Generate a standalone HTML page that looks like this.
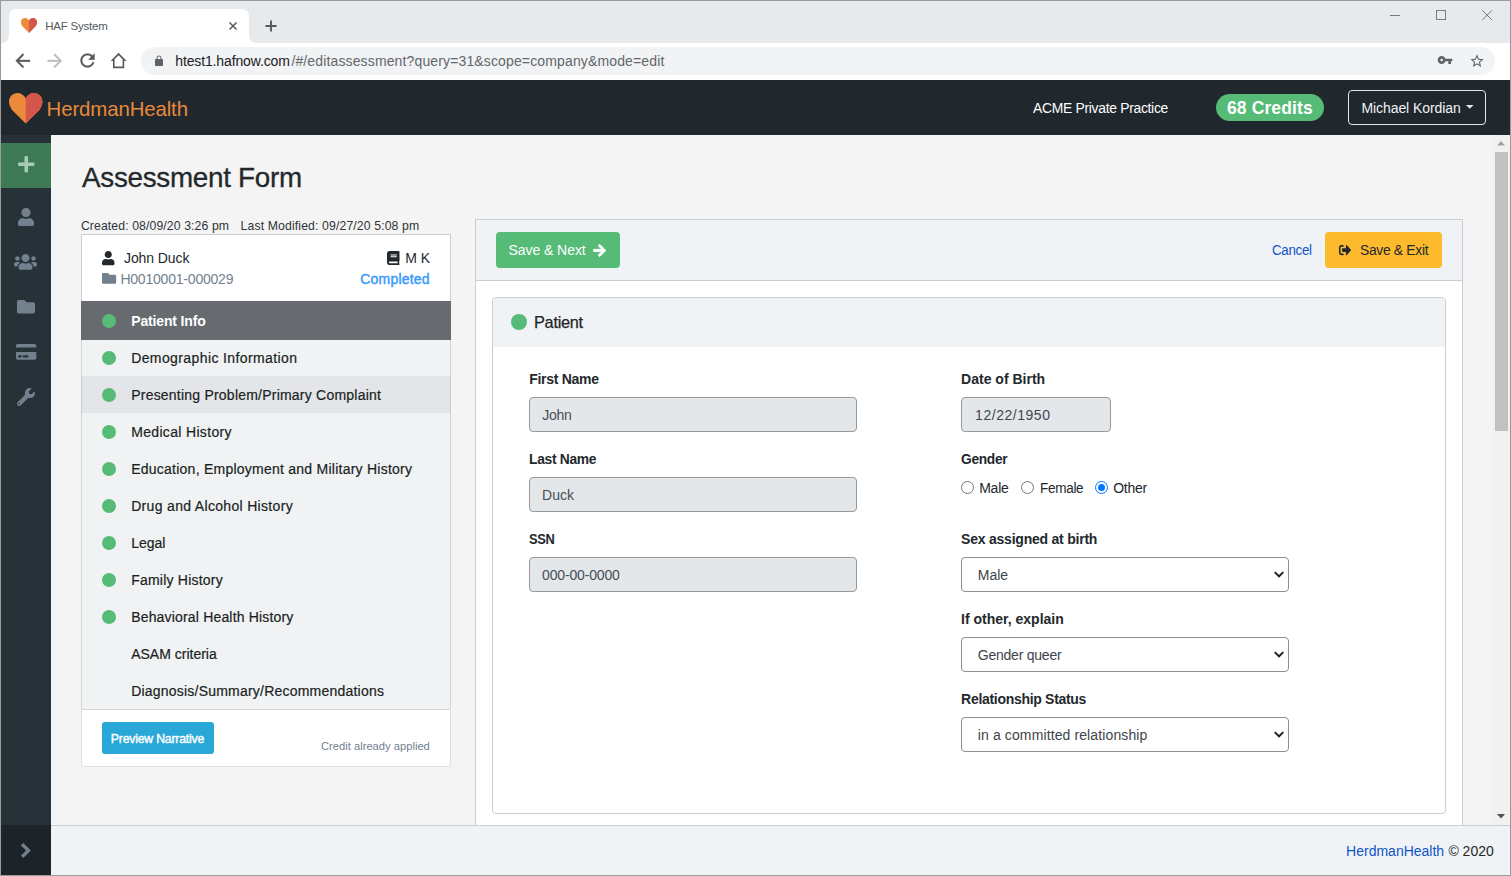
<!DOCTYPE html>
<html lang="en">
<head>
<meta charset="utf-8">
<title>HAF System</title>
<style>
*{box-sizing:border-box;margin:0;padding:0}
html,body{width:1511px;height:876px;overflow:hidden;background:#f4f4f4}
body{position:relative;font-family:"Liberation Sans",sans-serif;color:#23282c;font-size:14px}
.a{position:absolute}
.t{position:absolute;white-space:nowrap;line-height:1}
svg{position:absolute;display:block;overflow:visible}
#frame{left:0;top:0;width:1511px;height:876px;border:1px solid #9b9b9b;z-index:50}
#tabstrip{left:1px;top:1px;width:1509px;height:42px;background:#e7eaed}
#toolbar{left:1px;top:43px;width:1509px;height:37px;background:#fff}
#omni{left:141px;top:47px;width:1354px;height:28px;border-radius:14px;background:#f1f3f4}
#nav{left:1px;top:80px;width:1509px;height:55px;background:#20272d}
#side{left:1px;top:135px;width:50px;height:690px;background:#273238}
#sideplus{left:1px;top:143px;width:50px;height:45px;background:#3f7a57}
#sidemin{left:1px;top:825px;width:50px;height:50px;background:#1c2329}
#foot{left:51px;top:825px;width:1459px;height:50px;background:#f0f3f5;border-top:1px solid #c8ced3;z-index:5}
#sbar{left:1493px;top:135px;width:17px;height:690px;background:#f1f1f1}
#sthumb{left:1495px;top:152px;width:13px;height:279px;background:#c1c1c1}
#lcard{left:81px;top:234px;width:370px;height:70px;background:#fff;border:1px solid #c8ced3;border-bottom:0}
.row{position:absolute;left:82px;width:368px;height:37px;background:#f0f2f4}
.dot{position:absolute;left:102px;width:14px;height:14px;border-radius:50%;background:#55bb76}
#mcard{left:475px;top:219px;width:988px;height:620px;background:#fff;border:1px solid #c8ced3}
#mhead{left:476px;top:220px;width:986px;height:61px;background:#f0f3f5;border-bottom:1px solid #c8ced3}
#icard{left:492px;top:297px;width:954px;height:517px;background:#fff;border:1px solid #c8ced3;border-radius:4px}
#ihead{left:493px;top:298px;width:952px;height:49px;background:#f0f3f5;border-radius:3px 3px 0 0}
.inp{position:absolute;height:35px;border:1px solid #999;border-radius:4px;background:#e4e7ea}
.sel{position:absolute;left:961px;width:328px;height:35px;border:1px solid #8e8e8e;border-radius:4px;background:#fff}
.btn{position:absolute;border-radius:4px}
.radio{position:absolute;top:481px;width:13px;height:13px;border-radius:50%;border:1px solid #767676;background:#fff}
</style>
</head>
<body>
<!-- browser chrome -->
<div class="a" id="tabstrip"></div>
<svg style="left:0;top:0" width="260" height="44" viewBox="0 0 260 44"><path d="M1 43 Q9 43 9 35 L9 17 Q9 9 17 9 L241 9 Q249 9 249 17 L249 35 Q249 43 257 43 Z" fill="#fff"/></svg>
<div class="a" id="toolbar"></div>
<div class="a" id="omni"></div>
<!-- favicon heart -->
<svg style="left:21px;top:18.100px" width="16" height="15.100" viewBox="0 0 33.4 30.6" preserveAspectRatio="none"><defs><clipPath id="hl"><rect x="-1" y="-1" width="17.7" height="33"/></clipPath><clipPath id="hr"><rect x="16.7" y="-1" width="18" height="33"/></clipPath></defs><path id="hp" fill="#ec8a3b" d="M16.7 5.300C14.800 2 12 0 8.600 0C3.600 0 0 3.900 0 8.600C0 11.500 1 13.800 3 16.900L16.700 30.600L30.400 16.900C32.400 13.800 33.400 11.500 33.400 8.600C33.400 3.900 29.800 0 24.800 0C21.400 0 18.600 2 16.700 5.300Z"/><path clip-path="url(#hr)" fill="#d5564b" d="M16.7 5.300C14.800 2 12 0 8.600 0C3.600 0 0 3.900 0 8.600C0 11.500 1 13.800 3 16.900L16.700 30.600L30.400 16.900C32.400 13.800 33.400 11.500 33.400 8.600C33.400 3.900 29.800 0 24.800 0C21.400 0 18.600 2 16.700 5.300Z"/></svg>
<!-- tab close / new tab -->
<svg style="left:229px;top:22px" width="8" height="8" viewBox="0 0 8 8"><path d="M0.500 0.500L7.500 7.500M7.500 0.500L0.500 7.500" stroke="#595d61" stroke-width="1.550" fill="none"/></svg>
<svg style="left:264.500px;top:20px" width="12" height="12" viewBox="0 0 12 12"><path d="M6 0.500V11.500M0.500 6H11.500" stroke="#55595d" stroke-width="1.900" fill="none"/></svg>
<!-- window controls -->
<svg style="left:1390px;top:10px" width="110" height="12" viewBox="0 0 110 12"><path d="M0 5.500H10" stroke="#777a7e" stroke-width="1" fill="none"/><rect x="46.500" y="0.500" width="9" height="9" stroke="#777a7e" stroke-width="1" fill="none"/><path d="M92.300 0.300L102 10M102 0.300L92.300 10" stroke="#777a7e" stroke-width="1" fill="none"/></svg>
<!-- nav icons -->
<svg style="left:12.050px;top:50.200px" width="21.600" height="21.600" viewBox="0 0 24 24"><path fill="#55595e" stroke="#55595e" stroke-width="0.300" d="M20 11H7.830l5.590-5.590L12 4l-8 8 8 8 1.410-1.410L7.830 13H20v-2z"/></svg>
<svg style="left:44.100px;top:50.200px" width="21.600" height="21.600" viewBox="0 0 24 24"><path fill="#babdc1" stroke="#babdc1" stroke-width="0.300" d="M12 4l-1.410 1.410L16.170 11H4v2h12.170l-5.580 5.590L12 20l8-8z"/></svg>
<svg style="left:76.600px;top:50.200px" width="21" height="21" viewBox="0 0 24 24"><path fill="#55595e" stroke="#55595e" stroke-width="0.300" d="M17.650 6.350C16.200 4.900 14.210 4 12 4c-4.420 0-7.990 3.580-7.990 8s3.570 8 7.990 8c3.730 0 6.840-2.550 7.730-6h-2.080c-.82 2.330-3.040 4-5.650 4-3.310 0-6-2.690-6-6s2.690-6 6-6c1.660 0 3.140.69 4.220 1.780L13 11h7V4l-2.350 2.350z"/></svg>
<svg style="left:109.400px;top:50.350px" width="19.200" height="22" viewBox="0 0 24 24" preserveAspectRatio="none"><path fill="#55595e" d="M12 5.690l5 4.500V18H7v-7.810l5-4.500M12 3L2 12h3v8h14v-8h3L12 3z"/></svg>
<svg style="left:152.900px;top:54.500px" width="12" height="12" viewBox="0 0 24 24"><path fill="#5f6368" d="M18 8h-1V6c0-2.760-2.240-5-5-5S7 3.240 7 6v2H6c-1.100 0-2 .9-2 2v10c0 1.100.9 2 2 2h12c1.100 0 2-.9 2-2V10c0-1.100-.9-2-2-2zm-2.900 0H8.900V6c0-1.710 1.390-3.100 3.100-3.100 1.710 0 3.100 1.390 3.100 3.100v2z"/></svg>
<svg style="left:1437px;top:52px" width="16" height="16" viewBox="0 0 24 24"><path fill="#5f6368" d="M12.650 10C11.830 7.670 9.610 6 7 6c-3.310 0-6 2.690-6 6s2.690 6 6 6c2.610 0 4.830-1.670 5.650-4H17v4h4v-4h2v-4H12.650zM7 14c-1.100 0-2-.9-2-2s.9-2 2-2 2 .9 2 2-.9 2-2 2z"/></svg>
<svg style="left:1469px;top:53px" width="16" height="16" viewBox="0 0 24 24"><path fill="#5f6368" d="M22 9.240l-7.190-.62L12 2 9.190 8.630 2 9.240l5.460 4.730L5.820 21 12 17.270 18.180 21l-1.630-7.030L22 9.240zM12 15.400l-3.760 2.270 1-4.280-3.320-2.880 4.380-.38L12 6.100l1.710 4.040 4.380.38-3.320 2.880 1 4.280L12 15.400z"/></svg>

<!-- app -->
<div class="a" id="nav"></div>
<div class="a" id="side"></div>
<div class="a" id="sideplus"></div>
<div class="a" id="sidemin"></div>
<div class="a" id="sbar"></div>
<div class="a" id="sthumb"></div>
<svg style="left:1497.200px;top:141.300px" width="8" height="4.500" viewBox="0 0 8 4.500"><path d="M0 4.500L4 0L8 4.500Z" fill="#a3a3a3"/></svg>
<svg style="left:1497.100px;top:813.500px;z-index:6" width="8" height="4.500" viewBox="0 0 8 4.500"><path d="M0 0L4 4.500L8 0Z" fill="#505050"/></svg>

<!-- brand heart -->
<svg style="left:8.800px;top:92.800px" width="33.400" height="30.600" viewBox="0 0 33.4 30.6" preserveAspectRatio="none"><path fill="#ec8a3b" d="M16.7 5.300C14.800 2 12 0 8.600 0C3.600 0 0 3.900 0 8.600C0 11.500 1 13.800 3 16.900L16.700 30.600L30.400 16.900C32.400 13.800 33.400 11.500 33.400 8.600C33.400 3.900 29.800 0 24.800 0C21.400 0 18.600 2 16.700 5.300Z"/><path clip-path="url(#hr)" fill="#d5564b" d="M16.7 5.300C14.800 2 12 0 8.600 0C3.600 0 0 3.900 0 8.600C0 11.500 1 13.800 3 16.900L16.700 30.600L30.400 16.900C32.400 13.800 33.400 11.500 33.400 8.600C33.400 3.900 29.800 0 24.800 0C21.400 0 18.600 2 16.700 5.300Z"/></svg>
<div class="a" style="left:1216px;top:94px;width:108px;height:27px;border-radius:14px;background:#55bb76"></div>
<div class="a" style="left:1348px;top:90px;width:138px;height:35px;border:1px solid #e4e7ea;border-radius:4px"></div>
<svg style="left:1465.600px;top:105.400px" width="7.500" height="3.700" viewBox="0 0 8 4" preserveAspectRatio="none"><path d="M0 0L4 4L8 0Z" fill="#e4e7ea"/></svg>

<!-- sidebar icons -->
<svg style="left:17.600px;top:155.900px" width="16.500" height="16.500" viewBox="0 32 448 448"><path fill="#a7ccb7" d="M416 208H272V64c0-17.670-14.330-32-32-32h-32c-17.670 0-32 14.330-32 32v144H32c-17.670 0-32 14.330-32 32v32c0 17.670 14.330 32 32 32h144v144c0 17.670 14.330 32 32 32h32c17.670 0 32-14.330 32-32V304h144c17.670 0 32-14.330 32-32v-32c0-17.670-14.330-32-32-32z"/></svg>
<svg style="left:18px;top:208px" width="16" height="18" viewBox="0 0 448 512" preserveAspectRatio="none"><path fill="#73818f" d="M224 256c70.700 0 128-57.300 128-128S294.700 0 224 0 96 57.300 96 128s57.300 128 128 128zm89.600 32h-16.700c-22.200 10.200-46.900 16-72.900 16s-50.600-5.800-72.900-16h-16.700C60.200 288 0 348.200 0 422.400V464c0 26.500 21.500 48 48 48h352c26.500 0 48-21.500 48-48v-41.600c0-74.200-60.200-134.400-134.400-134.400z"/></svg>
<svg style="left:13.900px;top:254.100px" width="23" height="15.750" viewBox="0 32 640 448" preserveAspectRatio="none"><path fill="#73818f" d="M96 224c35.300 0 64-28.700 64-64s-28.700-64-64-64-64 28.700-64 64 28.700 64 64 64zm448 0c35.300 0 64-28.700 64-64s-28.700-64-64-64-64 28.700-64 64 28.700 64 64 64zm32 32h-64c-17.600 0-33.500 7.100-45.100 18.600 40.300 22.100 68.900 62 75.100 109.400h66c17.700 0 32-14.300 32-32v-32c0-35.300-28.700-64-64-64zm-256 0c61.900 0 112-50.100 112-112S381.900 32 320 32 208 82.100 208 144s50.100 112 112 112zm76.800 32h-8.300c-20.800 10-43.900 16-68.500 16s-47.600-6-68.500-16h-8.300C179.600 288 128 339.600 128 403.200V432c0 26.500 21.500 48 48 48h288c26.500 0 48-21.500 48-48v-28.800c0-63.600-51.600-115.200-115.200-115.200zm-223.700-13.400C161.500 263.100 145.600 256 128 256H64c-35.300 0-64 28.700-64 64v32c0 17.700 14.300 32 32 32h65.900c6.300-47.400 34.900-87.300 75.200-109.400z"/></svg>
<svg style="left:17px;top:300.250px" width="18" height="13.500" viewBox="0 64 512 384" preserveAspectRatio="none"><path fill="#73818f" d="M464 128H272l-64-64H48C21.490 64 0 85.490 0 112v288c0 26.510 21.490 48 48 48h416c26.510 0 48-21.490 48-48V176c0-26.510-21.490-48-48-48z"/></svg>
<svg style="left:15.900px;top:344.100px" width="20.250" height="15.750" viewBox="0 32 576 448" preserveAspectRatio="none"><path fill="#73818f" d="M0 432c0 26.500 21.500 48 48 48h480c26.500 0 48-21.500 48-48V256H0v176zm192-68c0-6.600 5.400-12 12-12h136c6.600 0 12 5.400 12 12v40c0 6.600-5.400 12-12 12H204c-6.600 0-12-5.400-12-12v-40zm-128 0c0-6.600 5.400-12 12-12h72c6.600 0 12 5.400 12 12v40c0 6.600-5.400 12-12 12H76c-6.600 0-12-5.400-12-12v-40zM576 80v48H0V80c0-26.500 21.500-48 48-48h480c26.500 0 48 21.500 48 48z"/></svg>
<svg style="left:17px;top:388px" width="18" height="18" viewBox="0 0 512 512"><path fill="#73818f" d="M507.730 109.100c-2.240-9.030-13.540-12.090-20.120-5.510l-74.360 74.360-67.880-11.310-11.310-67.880 74.360-74.360c6.620-6.620 3.430-17.900-5.660-20.160-47.380-11.740-99.550.91-136.580 37.930-39.640 39.640-50.550 97.100-34.050 147.200L18.740 402.760c-24.990 24.990-24.990 65.510 0 90.500 24.990 24.990 65.510 24.990 90.500 0l213.210-213.210c50.120 16.710 107.470 5.680 147.370-34.220 37.070-37.070 49.700-89.320 37.910-136.730zM64 472c-13.250 0-24-10.750-24-24 0-13.260 10.750-24 24-24s24 10.740 24 24c0 13.250-10.750 24-24 24z"/></svg>
<svg style="left:0;top:0" width="60" height="876" viewBox="0 0 60 876"><path d="M22.100 844.200L28.500 850.450L22.100 856.700" fill="none" stroke="#73818f" stroke-width="3.300" stroke-linejoin="miter"/></svg>

<!-- left card -->
<div class="a" id="lcard"></div>
<svg style="left:101.900px;top:250.700px" width="12.500" height="14.200" viewBox="0 0 448 512" preserveAspectRatio="none"><path fill="#23282c" d="M224 256c70.700 0 128-57.300 128-128S294.700 0 224 0 96 57.300 96 128s57.300 128 128 128zm89.600 32h-16.700c-22.200 10.200-46.900 16-72.900 16s-50.600-5.800-72.900-16h-16.700C60.200 288 0 348.200 0 422.400V464c0 26.500 21.500 48 48 48h352c26.500 0 48-21.500 48-48v-41.600c0-74.200-60.200-134.400-134.400-134.400z"/></svg>
<svg style="left:101.800px;top:273.200px" width="14.200" height="10.800" viewBox="0 64 512 384" preserveAspectRatio="none"><path fill="#73818f" d="M464 128H272l-64-64H48C21.490 64 0 85.490 0 112v288c0 26.510 21.490 48 48 48h416c26.510 0 48-21.490 48-48V176c0-26.510-21.490-48-48-48z"/></svg>
<svg style="left:386.600px;top:250.900px" width="12.500" height="14" viewBox="0 0 448 512" preserveAspectRatio="none"><path fill="#23282c" d="M448 360V24c0-13.300-10.700-24-24-24H96C43 0 0 43 0 96v320c0 53 43 96 96 96h328c13.300 0 24-10.700 24-24v-16c0-7.500-3.500-14.300-8.900-18.700-4.200-15.400-4.200-59.300 0-74.700 5.400-4.300 8.900-11.100 8.900-18.600zM128 134c0-3.300 2.700-6 6-6h212c3.300 0 6 2.700 6 6v20c0 3.300-2.700 6-6 6H134c-3.300 0-6-2.700-6-6v-20zm0 64c0-3.300 2.700-6 6-6h212c3.300 0 6 2.700 6 6v20c0 3.300-2.700 6-6 6H134c-3.300 0-6-2.700-6-6v-20zm253.400 250H96c-17.700 0-32-14.300-32-32 0-17.600 14.400-32 32-32h285.400c-1.900 17.100-1.900 46.900 0 64z"/></svg>

<div class="a" style="left:81px;top:340px;width:370px;height:370px;background:#f0f2f4;border-left:1px solid #d2d4d6;border-right:1px solid #d2d4d6"></div>
<div class="a" style="left:81px;top:301px;width:370px;height:39px;background:#676b6f"></div>
<div class="a" style="left:81px;top:376px;width:370px;height:37px;background:#e3e5e9;border-left:1px solid #c9cbcf;border-right:1px solid #c9cbcf"></div>
<div class="a" style="left:81px;top:709px;width:370px;height:58px;background:#fff;border:1px solid #dfdfdf;border-top:1px solid #d2d4d6;border-radius:0 0 4px 4px"></div>
<div class="dot" style="top:314px"></div><div class="dot" style="top:351px"></div><div class="dot" style="top:388px"></div>
<div class="dot" style="top:425px"></div><div class="dot" style="top:462px"></div><div class="dot" style="top:499px"></div>
<div class="dot" style="top:536px"></div><div class="dot" style="top:573px"></div><div class="dot" style="top:610px"></div>
<div class="btn" style="left:102px;top:722px;width:112px;height:32px;background:#29a8d8;border-radius:3px"></div>

<!-- main card -->
<div class="a" id="mcard"></div>
<div class="a" id="mhead"></div>
<div class="btn" style="left:496px;top:232px;width:124px;height:36px;background:#55bb76"></div>
<svg style="left:593.200px;top:244px" width="13" height="12.900" viewBox="-16 22 480 468" preserveAspectRatio="none"><path fill="#fff" stroke="#fff" stroke-width="32" stroke-linejoin="round" d="M190.500 66.900l22.200-22.200c9.400-9.400 24.600-9.400 33.900 0L441 239c9.400 9.400 9.400 24.600 0 33.900L246.600 467.300c-9.400 9.400-24.600 9.400-33.900 0l-22.200-22.200c-9.500-9.500-9.300-25 .4-34.300L311.400 296H24c-13.300 0-24-10.700-24-24v-32c0-13.300 10.700-24 24-24h287.400L190.900 101.200c-9.800-9.300-10-24.800-.4-34.300z"/></svg>
<div class="btn" style="left:1325px;top:232px;width:117px;height:36px;background:#fdba2c"></div>
<svg style="left:1338.800px;top:245px" width="12.250" height="10.200" viewBox="0 64 512 384" preserveAspectRatio="none"><path fill="#23282c" d="M497 273L329 441c-15 15-41 4.500-41-17v-96H152c-13.300 0-24-10.700-24-24v-96c0-13.300 10.700-24 24-24h136V88c0-21.400 25.900-32 41-17l168 168c9.300 9.400 9.300 24.600 0 34zM192 436v-40c0-6.600-5.400-12-12-12H96c-17.700 0-32-14.300-32-32V160c0-17.700 14.300-32 32-32h84c6.600 0 12-5.400 12-12V76c0-6.600-5.400-12-12-12H96c-53 0-96 43-96 96v192c0 53 43 96 96 96h84c6.600 0 12-5.400 12-12z"/></svg>
<div class="a" id="icard"></div>
<div class="a" id="ihead"></div>
<div class="a" style="left:511.400px;top:313.900px;width:15.800px;height:15.800px;border-radius:50%;background:#55bb76"></div>

<div class="inp" style="left:529px;top:397px;width:328px"></div>
<div class="inp" style="left:529px;top:477px;width:328px"></div>
<div class="inp" style="left:529px;top:557px;width:328px"></div>
<div class="inp" style="left:961px;top:397px;width:150px"></div>
<div class="radio" style="left:961px"></div>
<div class="radio" style="left:1021px"></div>
<div class="radio" style="left:1095px;border:1.200px solid #0075ff"></div>
<div class="a" style="left:1097.600px;top:483.600px;width:7.800px;height:7.800px;border-radius:50%;background:#0075ff"></div>
<div class="sel" style="top:557px"></div>
<div class="sel" style="top:637px"></div>
<div class="sel" style="top:717px"></div>
<svg style="left:1273.800px;top:571px" width="10" height="7" viewBox="0 0 10 7"><path d="M0.700 1.100L5 5.300L9.300 1.100" stroke="#1f1f1f" stroke-width="1.900" fill="none"/></svg>
<svg style="left:1273.800px;top:651px" width="10" height="7" viewBox="0 0 10 7"><path d="M0.700 1.100L5 5.300L9.300 1.100" stroke="#1f1f1f" stroke-width="1.900" fill="none"/></svg>
<svg style="left:1273.800px;top:731px" width="10" height="7" viewBox="0 0 10 7"><path d="M0.700 1.100L5 5.300L9.300 1.100" stroke="#1f1f1f" stroke-width="1.900" fill="none"/></svg>

<div class="a" id="foot"></div>
<div style="position:absolute;left:0;top:0;z-index:10">
<div class="t" id="tabtitle" style="left:45.20px;top:21.00px;font-size:11.5px;color:#56595e;letter-spacing:-0.222px">HAF System</div>
<div class="t" id="url" style="left:175.30px;top:54.00px;font-size:14px;color:#202124;letter-spacing:-0.138px">htest1.hafnow.com</div>
<div class="t" id="urlp" style="left:291.40px;top:54.00px;font-size:14px;color:#63676c;letter-spacing:0.137px">/#/editassessment?query=31&amp;scope=company&amp;mode=edit</div>
<div class="t" id="brand" style="left:46.62px;top:99.00px;font-size:20.4px;color:#e8893b;letter-spacing:-0.117px">HerdmanHealth</div>
<div class="t" id="acme" style="left:1032.86px;top:101.00px;font-size:14px;color:#ffffff;letter-spacing:-0.300px;transform:scaleX(0.9918);transform-origin:0 0">ACME Private Practice</div>
<div class="t" id="credits" style="left:1227.00px;top:100.00px;font-size:17.5px;color:#ffffff;font-weight:700;letter-spacing:0.111px">68 Credits</div>
<div class="t" id="user" style="left:1361.40px;top:101.00px;font-size:14px;color:#f0f3f5;letter-spacing:-0.071px">Michael Kordian</div>
<div class="t" id="h1" style="left:81.94px;top:164.00px;font-size:28px;color:#23282c;letter-spacing:-0.300px;transform:scaleX(0.9945);transform-origin:0 0;-webkit-text-stroke:0.3px #23282c">Assessment Form</div>
<div class="t" id="created" style="left:80.90px;top:220.00px;font-size:12.25px;color:#30353a;letter-spacing:0.100px">Created: 08/09/20 3:26 pm</div>
<div class="t" id="modified" style="left:240.60px;top:220.00px;font-size:12.25px;color:#30353a;letter-spacing:0.120px">Last Modified: 09/27/20 5:08 pm</div>
<div class="t" id="jd" style="left:124.04px;top:251.00px;font-size:14px;color:#23282c;letter-spacing:-0.100px">John Duck</div>
<div class="t" id="hid" style="left:120.40px;top:272.00px;font-size:14px;color:#73818f;letter-spacing:-0.207px">H0010001-000029</div>
<div class="t" id="mk" style="left:405.30px;top:251.00px;font-size:14px;color:#23282c">M K</div>
<div class="t" id="comp" style="left:360.30px;top:272.00px;font-size:14px;color:#3b9bfb;letter-spacing:0.188px;-webkit-text-stroke:0.45px #3b9bfb">Completed</div>
<div class="t" id="preview" style="left:110.80px;top:733.00px;font-size:12.25px;color:#ffffff;letter-spacing:-0.200px;-webkit-text-stroke:0.4px #ffffff">Preview Narrative</div>
<div class="t" id="credit" style="left:321.00px;top:741.00px;font-size:11.2px;color:#73818f">Credit already applied</div>
<div class="t" id="savenext" style="left:508.50px;top:243.00px;font-size:14px;color:#ffffff;letter-spacing:-0.060px">Save &amp; Next</div>
<div class="t" id="cancel" style="left:1271.86px;top:243.00px;font-size:14px;color:#0f53c9;letter-spacing:-0.300px;transform:scaleX(0.9509);transform-origin:0 0">Cancel</div>
<div class="t" id="saveexit" style="left:1360.20px;top:243.00px;font-size:14px;color:#23282c;letter-spacing:-0.300px;transform:scaleX(0.9874);transform-origin:0 0">Save &amp; Exit</div>
<div class="t" id="patient" style="left:534.20px;top:314.00px;font-size:17px;color:#1f2427;letter-spacing:-0.300px;transform:scaleX(0.9602);transform-origin:0 0;-webkit-text-stroke:0.25px #1f2427">Patient</div>
<div class="t" id="l_fn" style="left:529.20px;top:372.00px;font-size:14px;color:#23282c;font-weight:700;letter-spacing:-0.289px">First Name</div>
<div class="t" id="l_ln" style="left:529.20px;top:452.00px;font-size:14px;color:#23282c;font-weight:700;letter-spacing:-0.300px;transform:scaleX(0.9874);transform-origin:0 0">Last Name</div>
<div class="t" id="l_ssn" style="left:529.20px;top:532.00px;font-size:14px;color:#23282c;font-weight:700;letter-spacing:-0.300px;transform:scaleX(0.9169);transform-origin:0 0">SSN</div>
<div class="t" id="l_dob" style="left:961.10px;top:372.00px;font-size:14px;color:#23282c;font-weight:700">Date of Birth</div>
<div class="t" id="l_gen" style="left:961.10px;top:452.00px;font-size:14px;color:#23282c;font-weight:700;letter-spacing:-0.300px;transform:scaleX(0.9803);transform-origin:0 0">Gender</div>
<div class="t" id="l_sex" style="left:961.10px;top:532.00px;font-size:14px;color:#23282c;font-weight:700;letter-spacing:-0.225px">Sex assigned at birth</div>
<div class="t" id="l_oth" style="left:961.10px;top:612.00px;font-size:14px;color:#23282c;font-weight:700">If other, explain</div>
<div class="t" id="l_rel" style="left:961.10px;top:692.00px;font-size:14px;color:#23282c;font-weight:700;letter-spacing:-0.300px">Relationship Status</div>
<div class="t" id="v_fn" style="left:542.22px;top:408.00px;font-size:14px;color:#474e56;letter-spacing:-0.300px">John</div>
<div class="t" id="v_ln" style="left:542.10px;top:488.00px;font-size:14px;color:#474e56">Duck</div>
<div class="t" id="v_ssn" style="left:542.10px;top:568.00px;font-size:14px;color:#474e56;letter-spacing:-0.170px">000-00-0000</div>
<div class="t" id="v_dob" style="left:975.10px;top:408.00px;font-size:14px;color:#40464c;letter-spacing:0.533px">12/22/1950</div>
<div class="t" id="r_m" style="left:979.20px;top:481.00px;font-size:14px;color:#23282c;letter-spacing:-0.233px">Male</div>
<div class="t" id="r_f" style="left:1039.50px;top:481.00px;font-size:14px;color:#23282c;letter-spacing:-0.300px;transform:scaleX(0.9657);transform-origin:0 0">Female</div>
<div class="t" id="r_o" style="left:1113.20px;top:481.00px;font-size:14px;color:#23282c;letter-spacing:-0.250px">Other</div>
<div class="t" id="s_sex" style="left:977.80px;top:568.00px;font-size:14px;color:#3e444a">Male</div>
<div class="t" id="s_oth" style="left:977.80px;top:648.00px;font-size:14px;color:#3e444a;letter-spacing:-0.236px">Gender queer</div>
<div class="t" id="s_rel" style="left:977.80px;top:728.00px;font-size:14px;color:#3e444a;letter-spacing:0.115px">in a committed relationship</div>
<div class="t" id="f_hh" style="left:1346.10px;top:844.00px;font-size:14px;color:#0f53c9">HerdmanHealth</div>
<div class="t" id="f_c" style="left:1448.40px;top:844.00px;font-size:14px;color:#23282c">© 2020</div>
<div class="t" id="li0" style="left:131.20px;top:314.00px;font-size:14px;color:#ffffff;font-weight:700;letter-spacing:-0.145px">Patient Info</div>
<div class="t" id="li1" style="left:131.20px;top:351.00px;font-size:14px;color:#1b1f22;letter-spacing:0.395px;-webkit-text-stroke:0.2px #1b1f22">Demographic Information</div>
<div class="t" id="li2" style="left:131.20px;top:388.00px;font-size:14px;color:#1b1f22;letter-spacing:0.220px;-webkit-text-stroke:0.2px #1b1f22">Presenting Problem/Primary Complaint</div>
<div class="t" id="li3" style="left:131.20px;top:425.00px;font-size:14px;color:#1b1f22;letter-spacing:0.329px;-webkit-text-stroke:0.2px #1b1f22">Medical History</div>
<div class="t" id="li4" style="left:131.20px;top:462.00px;font-size:14px;color:#1b1f22;letter-spacing:0.244px;-webkit-text-stroke:0.2px #1b1f22">Education, Employment and Military History</div>
<div class="t" id="li5" style="left:131.20px;top:499.00px;font-size:14px;color:#1b1f22;letter-spacing:0.322px;-webkit-text-stroke:0.2px #1b1f22">Drug and Alcohol History</div>
<div class="t" id="li6" style="left:131.20px;top:536.00px;font-size:14px;color:#1b1f22;-webkit-text-stroke:0.2px #1b1f22">Legal</div>
<div class="t" id="li7" style="left:131.20px;top:573.00px;font-size:14px;color:#1b1f22;letter-spacing:0.223px;-webkit-text-stroke:0.2px #1b1f22">Family History</div>
<div class="t" id="li8" style="left:131.20px;top:610.00px;font-size:14px;color:#1b1f22;letter-spacing:0.175px;-webkit-text-stroke:0.2px #1b1f22">Behavioral Health History</div>
<div class="t" id="li9" style="left:131.20px;top:647.00px;font-size:14px;color:#1b1f22;-webkit-text-stroke:0.2px #1b1f22">ASAM criteria</div>
<div class="t" id="li10" style="left:131.20px;top:684.00px;font-size:14px;color:#1b1f22;letter-spacing:0.213px;-webkit-text-stroke:0.2px #1b1f22">Diagnosis/Summary/Recommendations</div>
</div>
<div class="a" id="frame"></div>
</body>
</html>
